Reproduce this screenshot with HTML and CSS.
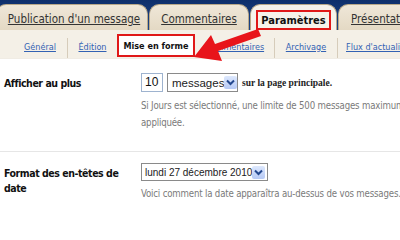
FILE: index.html
```html
<!DOCTYPE html>
<html lang="fr">
<head>
<meta charset="utf-8">
<title>Paramètres - Mise en forme</title>
<link rel="stylesheet" href="styles.css">
</head>
<body>
<div class="page">
  <div class="tabs">
    <a class="tab tab-pub">Publication d'un message</a>
    <a class="tab tab-com">Commentaires</a>
    <a class="tab tab-param active"><span class="hl">Paramètres</span></a>
    <a class="tab tab-pres">Présentation</a>
  </div>
  <div class="subnav">
    <a class="sub sub-gen">Général</a>
    <a class="sub sub-edit">Édition</a>
    <span class="sub current">Mise en forme</span>
    <a class="sub sub-com">Commentaires</a>
    <a class="sub sub-arch">Archivage</a>
    <a class="sub sub-flux">Flux d'actualités</a>
  </div>
  <div class="content">
    <div class="row row-first">
      <div class="label">Afficher au plus</div>
      <div class="field">
        <div class="controls">
          <span class="textbox">10</span>
          <span class="select select-msg">messages<span class="dd"><svg width="9" height="7" viewBox="0 0 9 7"><path d="M1 1.5 L4.5 5 L8 1.5" fill="none" stroke="#24488f" stroke-width="2"/></svg></span></span>
          <span class="suffix">sur la page principale.</span>
        </div>
        <p class="hint">Si Jours est sélectionné, une limite de 500 messages maximum sera appliquée.</p>
      </div>
    </div>
    <div class="row row-second">
      <div class="label">Format des en-têtes de date</div>
      <div class="field">
        <div class="controls">
          <span class="select select-date">lundi 27 décembre 2010<span class="dd"><svg width="9" height="7" viewBox="0 0 9 7"><path d="M1 1.5 L4.5 5 L8 1.5" fill="none" stroke="#24488f" stroke-width="2"/></svg></span></span>
        </div>
        <p class="hint">Voici comment la date apparaîtra au-dessus de vos messages.</p>
      </div>
    </div>
  </div>
  <svg class="arrow" width="400" height="207" viewBox="0 0 400 207">
    <polygon points="194,57 211,35 215,44 258,29 261,36 218,51 222,61" fill="#e8141a"/>
  </svg>
</div>
</body>
</html>
```

FILE: styles.css
```css
html, body {
  margin: 0;
  padding: 0;
  background: #ffffff;
}
.page {
  position: relative;
  width: 400px;
  height: 207px;
  overflow: hidden;
  font-family: "DejaVu Sans", "Liberation Sans", sans-serif;
}
.tabs {
  display: flex;
  align-items: flex-end;
  gap: 1px;
  height: 30px;
  background: linear-gradient(#0e2f6b, #1d4688);
  box-sizing: border-box;
  white-space: nowrap;
}
.tab {
  display: block;
  height: 26px;
  box-sizing: border-box;
  padding: 7px 0 0;
  text-align: center;
  background: linear-gradient(#efe7d8, #e4d9c4);
  border: 1px solid #b9a888;
  border-bottom: none;
  border-radius: 10px 10px 0 0;
  font-family: "DejaVu Sans Condensed", "DejaVu Sans", sans-serif;
  font-size: 11.5px;
  color: #333333;
  text-decoration: underline;
  flex: none;
}
.tab-pub { width: 152px; margin-left: -4px; padding-left: 4px; }
.tab-com { width: 100px; }
.tab-param { width: 87px; }
.tab-pres { width: 80px; text-align: left; padding-left: 12px; }
.tab.active {
  background: #f6f2ea;
  text-decoration: none;
  font-weight: bold;
  font-size: 11px;
  color: #111;
  padding-top: 5px;
}
.hl {
  display: inline-block;
  border: 2px solid #e01818;
  height: 20px;
  box-sizing: border-box;
  padding: 2px 3px 0;
}
.subnav {
  display: flex;
  align-items: flex-end;
  height: 28px;
  background: #f4f0e7;
  padding-left: 13px;
  box-sizing: border-box;
  white-space: nowrap;
}
.sub {
  display: block;
  height: 20px;
  box-sizing: border-box;
  padding: 4px 0 0;
  text-align: center;
  font-family: "DejaVu Sans Condensed", "DejaVu Sans", sans-serif;
  font-size: 9px;
  color: #3362b3;
  text-decoration: underline;
  border-left: 1px solid #d6ccba;
  flex: none;
}
.sub-gen { width: 54px; border-left: none; }
.sub-edit { width: 50px; }
.sub-com { width: 79px; border-left: none; }
.sub-arch { width: 63px; }
.sub-flux { width: 80px; text-align: left; padding-left: 8px; }
.sub.current {
  width: 78px;
  height: 23px;
  margin-bottom: 1px;
  padding-top: 5px;
  background: #ffffff;
  border: 2px solid #e01818;
  color: #111;
  font-weight: bold;
  text-decoration: none;
}
.content {
  border-top: 1px solid #f0ece4;
}
.row {
  display: flex;
}
.row-first {
  padding: 14px 0 20px;
  border-bottom: 1px solid #e6e6e6;
}
.row-second {
  padding: 11px 0 0;
}
.label {
  width: 136px;
  padding: 3px 14px 0 4px;
  box-sizing: border-box;
  flex: none;
  font-family: "DejaVu Sans Condensed", "DejaVu Sans", sans-serif;
  font-weight: bold;
  font-size: 10.5px;
  letter-spacing: -0.45px;
  line-height: 15px;
  color: #111;
}
.field {
  padding-left: 5px;
  flex: 1;
  min-width: 0;
}
.controls {
  display: flex;
  align-items: center;
  gap: 4px;
}
.textbox {
  display: block;
  width: 22px;
  height: 19px;
  box-sizing: border-box;
  border: 1px solid #9eb3cf;
  font-family: "Liberation Sans", sans-serif;
  font-size: 12px;
  line-height: 17px;
  padding-left: 3px;
  color: #111;
}
.select {
  display: flex;
  align-items: center;
  justify-content: space-between;
  height: 19px;
  box-sizing: border-box;
  border: 1px solid #8a8a8a;
  background: #fff;
  font-family: "Liberation Sans", sans-serif;
  font-size: 11.5px;
  color: #222;
  white-space: nowrap;
  padding: 0 2px 0 4px;
}
.select-msg { width: 71px; }
.select-date { width: 127px; height: 18px; font-size: 10px; padding: 0 2px 0 3px; }
.dd {
  display: flex;
  align-items: center;
  justify-content: center;
  width: 13px;
  height: 13px;
  flex: none;
  background: linear-gradient(#dde8fd, #b6c9f5);
  border-radius: 2px;
}
.suffix {
  font-family: "Liberation Serif", serif;
  font-weight: bold;
  font-size: 9.5px;
  color: #222;
}
.hint {
  margin: 5px 0 0;
  font-family: "DejaVu Sans Condensed", "DejaVu Sans", sans-serif;
  font-size: 9.6px;
  letter-spacing: -0.18px;
  line-height: 17px;
  color: #7a7a7a;
  width: 310px;
}
.row-second .hint { margin-top: 4px; width: 290px; }
.arrow {
  position: absolute;
  left: 0;
  top: 0;
  pointer-events: none;
}
```
